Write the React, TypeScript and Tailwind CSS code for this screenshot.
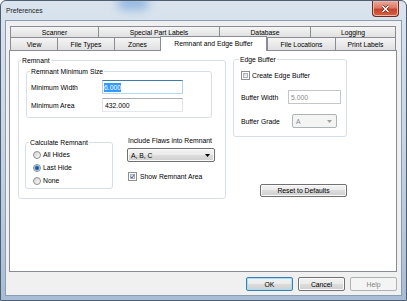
import React from 'react';

function Checkbox({ checked = false }: { checked?: boolean }) {
  return (
    <div className="w-[9px] h-[9px] shrink-0 border border-[#8e8f8f] bg-white p-px">
      <div className="w-full h-full border border-[#aeb3b9] bg-linear-to-br from-[#d3d6da] to-[#f8f8f8] flex items-center justify-center">
        {checked && (
          <svg width="7" height="7" viewBox="0 0 7 7" className="-m-[1px]">
            <path d="M1 3.6 L2.8 5.6 L6 1" fill="none" stroke="#3c5a9a" strokeWidth="1.4" />
          </svg>
        )}
      </div>
    </div>
  );
}

function Radio({ checked = false }: { checked?: boolean }) {
  return (
    <div className="w-[8px] h-[8px] shrink-0 rounded-full border border-[#8e8f8f] bg-linear-to-br from-[#d4d4d4] to-[#fafafa] flex items-center justify-center">
      {checked && <div className="w-[4px] h-[4px] rounded-full bg-[#1f5b98] shadow-[0_0_0_1px_#8fbde3]" />}
    </div>
  );
}

function Arrow({ color }: { color: string }) {
  return (
    <svg width="5" height="3" viewBox="0 0 5 3">
      <path d="M0 0 H5 L2.5 3 Z" fill={color} />
    </svg>
  );
}

const row1 = [
  { label: 'Scanner', w: 'w-[88px]' },
  { label: 'Special Part Labels', w: 'w-[121px]' },
  { label: 'Database', w: 'w-[91px]' },
  { label: 'Logging', w: 'w-[86px] border-r' },
];

const row2 = [
  { label: 'View', w: 'w-[47px]' },
  { label: 'File Types', w: 'w-[57px]' },
  { label: 'Zones', w: 'w-[46px]' },
];

const row2b = [
  { label: 'File Locations', w: 'w-[68px]' },
  { label: 'Print Labels', w: 'w-[61px] border-r' },
];

const tabBase =
  'flex items-center justify-center border-t border-l border-[#898c95] bg-linear-to-b from-[#f5f5f5] to-[#e0e0e0] whitespace-nowrap';

export default function App() {
  return (
    <div className="relative w-[407px] h-[301px] overflow-hidden flex flex-col rounded-t-[6px] border border-[#4f5e70] bg-linear-to-b from-[#dae4ee] via-[#c4d4e5] to-[#a8bdd5] font-['Liberation_Sans',Arial,sans-serif] text-[6.8px] leading-[9px] text-black">
      {/* glass reflection in the title bar */}
      <div className="absolute left-[116px] -top-[6px] w-[32px] h-[15px] rounded-full bg-[#6a9ddb] blur-[5px] opacity-60" />

      {/* Title bar */}
      <div className="relative h-[19px] shrink-0 flex items-start justify-between">
        <span className="ml-[5px] mt-[5px] text-[#1b1b1b]">Preferences</span>
        <div className="mr-[7px] w-[27px] h-[16px] rounded-b-[4px] border border-t-0 border-[#6d2b21] bg-[linear-gradient(#eaab9c,#dc7a66_45%,#c6442c_55%,#d9603f)] shadow-[inset_0_0_0_1px_#f0b7a8] flex items-center justify-center">
          <svg width="9" height="8" viewBox="0 0 9 8">
            <path d="M1.5 1 L7.5 7 M7.5 1 L1.5 7" stroke="#5a1d14" strokeWidth="2.6" />
            <path d="M1.5 1 L7.5 7 M7.5 1 L1.5 7" stroke="#ffffff" strokeWidth="1.5" />
          </svg>
        </div>
      </div>

      {/* Client area */}
      <div className="mx-[4px] h-[276px] shrink-0 border border-[#8a9db3] bg-[#f0f0f0] flex flex-col">
        <div className="ml-[3px] mt-[5px] w-[388px] flex flex-col">
          {/* Tabs */}
          <div className="ml-px flex h-[11px]">
            {row1.map((t) => (
              <div key={t.label} className={`${tabBase} ${t.w} h-[11px]`}>
                {t.label}
              </div>
            ))}
          </div>
          <div className="ml-px flex h-[13px] items-start">
            {row2.map((t) => (
              <div key={t.label} className={`${tabBase} ${t.w} h-[13px]`}>
                {t.label}
              </div>
            ))}
            <div className="relative z-10 -mt-px w-[107px] h-[15px] flex items-center justify-center pb-[2px] border-t border-x border-[#898c95] bg-white whitespace-nowrap">
              Remnant and Edge Buffer
            </div>
            {row2b.map((t) => (
              <div key={t.label} className={`${tabBase} ${t.w} h-[13px]`}>
                {t.label}
              </div>
            ))}
          </div>

          {/* Tab page */}
          <div className="h-[222px] border border-[#898c95] bg-white flex items-start pl-[8px]">
            {/* Remnant */}
            <fieldset className="mt-[5px] w-[208px] h-[143px] border border-[#d5dfe5] rounded-[3px]">
              <legend className="ml-[2px] px-px">Remnant</legend>

              <fieldset className="ml-[7px] mt-[2px] w-[186px] border border-[#d5dfe5] rounded-[3px]">
                <legend className="ml-[3px] px-px">Remnant Minimum Size</legend>
                <div className="pt-[4px] pb-[5px] pl-[4px] flex flex-col gap-[4px]">
                  <div className="flex items-center h-[14px]">
                    <span className="w-[71px]">Minimum Width</span>
                    <div className="w-[81px] h-[14px] border border-t-[#3d7bad] border-x-[#b5cfe7] border-b-[#b7d9ed] bg-white flex items-center pl-px">
                      <span className="bg-[#3399ff] text-white">6.000</span>
                    </div>
                  </div>
                  <div className="flex items-center h-[14px]">
                    <span className="w-[71px]">Minimum Area</span>
                    <div className="w-[81px] h-[14px] border border-t-[#abadb3] border-x-[#e2e3ea] border-b-[#e3e9ef] bg-white flex items-center pl-[2px]">
                      432.000
                    </div>
                  </div>
                </div>
              </fieldset>

              <div className="mt-[18px] flex items-start">
                <fieldset className="ml-[6px] mt-[2px] w-[88px] border border-[#d5dfe5] rounded-[3px]">
                  <legend className="ml-[3px] px-px">Calculate Remnant</legend>
                  <div className="pl-[7px] pt-px pb-px flex flex-col">
                    <div className="h-[13px] flex items-center gap-[2px]">
                      <Radio />
                      <span>All Hides</span>
                    </div>
                    <div className="h-[13px] flex items-center gap-[2px]">
                      <Radio checked />
                      <span>Last Hide</span>
                    </div>
                    <div className="h-[13px] flex items-center gap-[2px]">
                      <Radio />
                      <span>None</span>
                    </div>
                  </div>
                </fieldset>

                <div className="ml-[14px] flex flex-col">
                  <span className="pl-px whitespace-nowrap">Include Flaws into Remnant</span>
                  <div className="mt-[3px] w-[88px] h-[14px] rounded-[2px] border border-[#707070] bg-[linear-gradient(#f2f2f2,#ebebeb_50%,#dddddd_50%,#cfcfcf)] shadow-[inset_0_0_0_1px_#fbfbfb] flex items-center justify-between pl-[3px] pr-[4px]">
                    <span>A, B, C</span>
                    <Arrow color="#000000" />
                  </div>
                  <div className="mt-[10px] pl-px h-[9px] flex items-center gap-[3px]">
                    <Checkbox checked />
                    <span className="whitespace-nowrap">Show Remnant Area</span>
                  </div>
                </div>
              </div>
            </fieldset>

            {/* Edge Buffer + reset */}
            <div className="ml-[7px] w-[114px] flex flex-col">
              <fieldset className="mt-[4px] w-[114px] border border-[#d5dfe5] rounded-[3px]">
                <legend className="ml-[5px] px-px">Edge Buffer</legend>
                <div className="pl-[7px] pt-[7px] pb-[8px] flex flex-col">
                  <div className="h-[9px] flex items-center gap-[2px]">
                    <Checkbox />
                    <span className="whitespace-nowrap">Create Edge Buffer</span>
                  </div>
                  <div className="mt-[10px] h-[14px] flex items-center">
                    <span className="w-[47px] whitespace-nowrap">Buffer Width</span>
                    <div className="w-[53px] h-[14px] border border-[#c3c6cb] bg-white text-[#8a8a8a] flex items-center pl-[2px]">
                      5.000
                    </div>
                  </div>
                  <div className="mt-[10px] h-[14px] flex items-center">
                    <span className="w-[51px] whitespace-nowrap">Buffer Grade</span>
                    <div className="w-[45px] h-[14px] rounded-[2px] border border-[#adb2b5] bg-[#f4f4f4] text-[#8a8a8a] flex items-center justify-between pl-[3px] pr-[4px]">
                      <span>A</span>
                      <Arrow color="#a0a0a0" />
                    </div>
                  </div>
                </div>
              </fieldset>
              <div className="self-end mt-[47px] w-[87px] h-[13px] rounded-[2px] border border-[#707070] bg-[linear-gradient(#f2f2f2,#ebebeb_50%,#dddddd_50%,#cfcfcf)] shadow-[inset_0_0_0_1px_#fbfbfb] flex items-center justify-center">
                Reset to Defaults
              </div>
            </div>
          </div>

          {/* Dialog buttons */}
          <div className="mt-[5px] flex justify-end gap-[5px]">
            <div className="w-[47px] h-[14px] rounded-[2px] border border-[#3c7fb1] bg-[linear-gradient(#f2f2f2,#ebebeb_50%,#dddddd_50%,#cfcfcf)] shadow-[inset_0_0_0_1px_#a9dcf6] flex items-center justify-center">
              OK
            </div>
            <div className="w-[47px] h-[14px] rounded-[2px] border border-[#707070] bg-[linear-gradient(#f2f2f2,#ebebeb_50%,#dddddd_50%,#cfcfcf)] shadow-[inset_0_0_0_1px_#fbfbfb] flex items-center justify-center">
              Cancel
            </div>
            <div className="w-[47px] h-[14px] rounded-[2px] border border-[#adb2b5] bg-[#f4f4f4] text-[#838383] flex items-center justify-center">
              Help
            </div>
          </div>
        </div>
      </div>
    </div>
  );
}
